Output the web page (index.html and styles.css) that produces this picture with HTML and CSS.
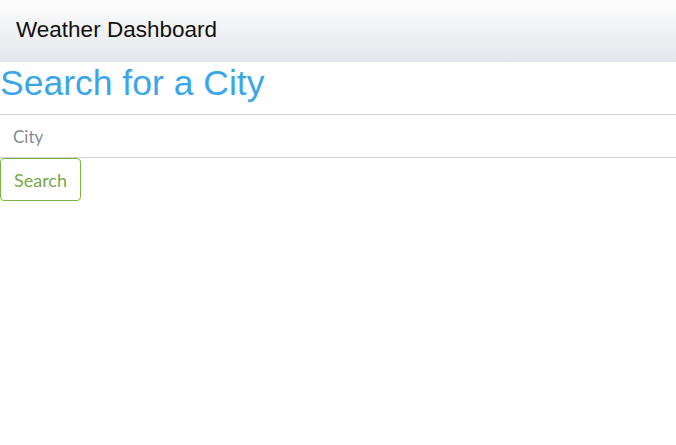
FILE: index.html
```html
<!DOCTYPE html>
<html>
<head>
<meta charset="utf-8">
<link rel="stylesheet" href="styles.css">
</head>
<body>
<header class="topbar"><span class="brand">Weather Dashboard</span></header>
<main class="search">
  <h1 class="title">Search for a City</h1>
  <input class="city" type="text" placeholder="City">
  <button class="btn">Search</button>
</main>
</body>
</html>
```
FILE: styles.css
```css
html, body { margin: 0; padding: 0; background: #fff; }
body { font-family: "Liberation Sans", Arial, sans-serif; }
.topbar {
  height: 62px;
  background: linear-gradient(#fdfdfd, #e3e6ea);
  display: flex;
  align-items: center;
  padding-left: 16px;
}
.brand { font-size: 22.5px; color: #111; position: relative; top: -1px; }
.search { display: flex; flex-direction: column; align-items: flex-start; }
.title {
  margin: 0;
  font-size: 35.5px;
  font-weight: normal;
  color: #3aa6e8;
  line-height: 42px;
  height: 52px;
}
.city {
  box-sizing: border-box;
  width: 100%;
  height: 44px;
  border: none;
  border-top: 1px solid #cdd2d8;
  border-bottom: 1px solid #cdd2d8;
  padding: 0 13px;
  font-family: Lato, "Open Sans", sans-serif;
  font-size: 17px;
  color: #555;
  outline: none;
}
.city::placeholder { color: #858c94; }
.btn {
  box-sizing: border-box;
  margin-top: 0;
  height: 43px;
  width: 81px;
  background: #fff;
  border: 1px solid #7cb342;
  border-radius: 4px;
  color: #76a846;
  font-family: Lato, "Open Sans", sans-serif;
  font-size: 18px;
  padding: 0;
}
```
